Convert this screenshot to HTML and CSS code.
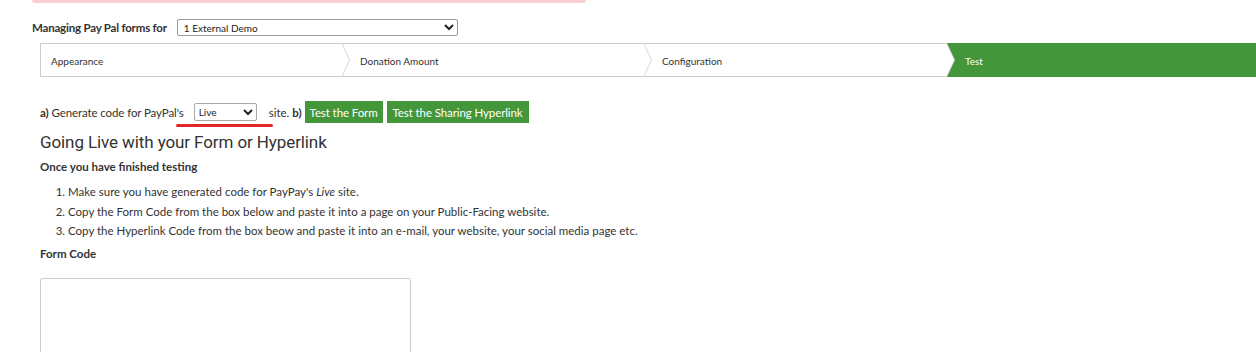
FILE: index.html
```html
<!DOCTYPE html>
<html lang="en">
<head>
    <meta charset="UTF-8">
    <meta name="viewport" content="width=device-width, initial-scale=1.0">
    <title>Pay Pal Forms</title>
    <link rel="stylesheet" href="styles.css">
</head>
<body>
    <div class="alert-bar"></div>

    <div class="form-picker">
        <label for="form-select">Managing Pay Pal forms for</label>
        <select id="form-select" class="picker-select">
            <option>1 External Demo</option>
        </select>
    </div>

    <div class="content">
        <div class="wizard">
            <div class="step">Appearance</div>
            <div class="step">Donation Amount</div>
            <div class="step">Configuration</div>
            <div class="step active">Test</div>
        </div>

        <div class="generate-row">
            <span><b>a)</b> Generate code for PayPal's</span>
            <span class="site-wrap">
                <select class="site-select">
                    <option>Live</option>
                    <option>Sandbox</option>
                </select>
                <span class="underline"></span>
            </span>
            <span>site. <b>b)</b></span>
            <button class="green-button">Test the Form</button>
            <button class="green-button">Test the Sharing Hyperlink</button>
        </div>

        <h2>Going Live with your Form or Hyperlink</h2>
        <h4>Once you have finished testing</h4>
        <ol class="steps-list">
            <li>Make sure you have generated code for PayPay's <i>Live</i> site.</li>
            <li>Copy the Form Code from the box below and paste it into a page on your Public-Facing website.</li>
            <li>Copy the Hyperlink Code from the box beow and paste it into an e-mail, your website, your social media page etc.</li>
        </ol>

        <h4 class="code-label">Form Code</h4>
        <textarea class="code-box"></textarea>
    </div>
</body>
</html>
```

FILE: styles.css
```css
html, body {
    overflow: hidden;
}
body {
    font-family: Lato, "Open Sans", sans-serif;
    font-size: 11.5px;
    color: #333;
    margin: 0;
    padding: 0;
    background: #fff;
}
.alert-bar {
    margin-left: 32px;
    width: 554px;
    height: 3px;
    background-color: #f9cfd2;
    border-radius: 0 0 3px 3px;
}
.form-picker {
    display: flex;
    align-items: center;
    gap: 10px;
    margin: 16px 0 0 32px;
    height: 17px;
}
.form-picker label {
    font-weight: bold;
    font-size: 11.5px;
    letter-spacing: -0.2px;
}
.picker-select {
    width: 281px;
    height: 17px;
    font-family: Lato, sans-serif;
    font-size: 10px;
    padding: 0 2px;
    border: 1px solid #999;
    border-radius: 2px;
    background: #fff;
    color: #222;
}
.content {
    padding-left: 40px;
}
.wizard {
    display: flex;
    height: 32px;
    margin-top: 7px;
    border: 1px solid #ccc;
    border-right: none;
}
.step {
    position: relative;
    width: 302px;
    flex: none;
    display: flex;
    align-items: center;
    padding: 1px 0 0 18px;
    box-sizing: border-box;
    font-size: 10px;
    background: #fff;
}
.step:first-child {
    width: 301px;
    padding-left: 10px;
}
.step:nth-child(3) {
    width: 303px;
}
.step::before,
.step::after {
    content: "";
    position: absolute;
    top: -1px;
    bottom: -1px;
    width: 8px;
    clip-path: polygon(0 0, 100% 50%, 0 100%);
    z-index: 2;
}
.step::before {
    right: -8px;
    background: #d6d6d6;
}
.step::after {
    right: -7px;
    background: #fff;
}
.step.active {
    flex: 1;
    background-color: #43963a;
    color: #fff;
    margin-top: -1px;
    margin-bottom: -1px;
}
.step.active::before,
.step.active::after {
    display: none;
}
.generate-row {
    display: flex;
    align-items: center;
    margin-top: 24px;
    height: 22px;
    font-size: 11.5px;
    white-space: nowrap;
}
.generate-row > span:first-child {
    letter-spacing: -0.1px;
}
.site-wrap {
    position: relative;
    margin: 0 12px 0 10px;
}
.site-select {
    width: 63px;
    height: 18px;
    font-family: Lato, sans-serif;
    font-size: 10px;
    border: 1px solid #aaa;
    border-radius: 2px;
    background: #fff;
    color: #222;
    display: block;
}
.underline {
    position: absolute;
    left: -18px;
    width: 97px;
    top: 21px;
    height: 3px;
    border-radius: 2px;
    background-color: #e3262a;
}
.green-button {
    height: 22px;
    background-color: #43963a;
    color: #fff;
    border: none;
    padding: 0 6px;
    margin-left: 4px;
    font-family: Lato, sans-serif;
    font-size: 11.5px;
    letter-spacing: -0.1px;
    white-space: nowrap;
    cursor: pointer;
}
.green-button:first-of-type {
    margin-left: 3px;
    padding: 0 5px;
}
h2 {
    font-family: Roboto, sans-serif;
    font-weight: normal;
    font-size: 17px;
    letter-spacing: -0.1px;
    margin: 7px 0 0 0;
    line-height: 24px;
    color: #333;
}
h4 {
    font-size: 11.5px;
    font-weight: bold;
    margin: 5px 0 0 0;
    line-height: 16px;
}
.steps-list {
    margin: 7px 0 0 0;
    padding-left: 28px;
    line-height: 19.5px;
}
.code-label {
    margin-top: 5px;
}
.code-box {
    display: block;
    margin-top: 16px;
    width: 371px;
    height: 100px;
    border: 1px solid #ccc;
    border-radius: 2px;
    resize: none;
    box-sizing: border-box;
}
```
